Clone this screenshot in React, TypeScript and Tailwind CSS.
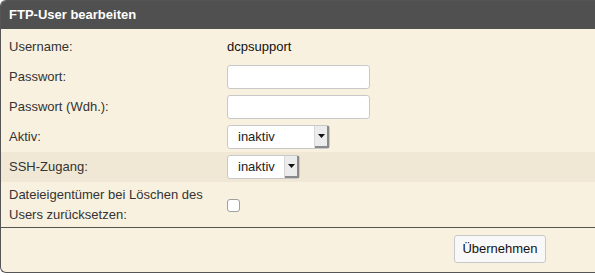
import React from "react";

function Select({ width }: { width: number }) {
  return (
    <div
      className="flex h-[24px] items-stretch rounded-[3px] border border-[#c8c8c8] bg-white"
      style={{ width }}
    >
      <div className="flex flex-1 items-center pl-[10px] text-[13px] text-[#222]">inaktiv</div>
      <div className="flex w-[15px] items-center justify-center border-l border-[#d8d8d8] bg-[#ececec] shadow-[inset_-2px_-2px_0_#8a8a8a]">
        <svg width="7" height="4" viewBox="0 0 7 4" className="mb-[2px] mr-[1px]">
          <path d="M0 0 L7 0 L3.5 4 Z" fill="#111" />
        </svg>
      </div>
    </div>
  );
}

function Row({
  label,
  children,
  striped,
}: {
  label: React.ReactNode;
  children?: React.ReactNode;
  striped?: boolean;
}) {
  return (
    <div className={`flex h-[30px] items-center ${striped ? "bg-[#f0e8d4]" : ""}`}>
      <div className="w-[226px] pl-[8px] text-[13px] text-[#333]">{label}</div>
      <div className="flex items-center">{children}</div>
    </div>
  );
}

export default function App() {
  return (
    <div
      className="h-[276px] w-[595px] bg-white"
      style={{ fontFamily: '"Liberation Sans", Arial, sans-serif' }}
    >
      <div className="h-[273px] w-[600px] overflow-hidden rounded-l-[6px] border border-r-0 border-[#555] bg-[#f9f1df]">
        <div className="flex h-[28px] items-center bg-[#505050] pl-[8px] text-[13px] font-bold text-white">
          FTP-User bearbeiten
        </div>
        <div className="pt-[3px]">
          <Row label="Username:">
            <span className="text-[13px] text-[#111]">dcpsupport</span>
          </Row>
          <Row label="Passwort:">
            <div className="h-[24px] w-[143px] rounded-[3px] border border-[#c8c8c8] bg-white" />
          </Row>
          <Row label="Passwort (Wdh.):">
            <div className="h-[24px] w-[143px] rounded-[3px] border border-[#c8c8c8] bg-white" />
          </Row>
          <Row label="Aktiv:">
            <Select width={103} />
          </Row>
          <Row label="SSH-Zugang:" striped>
            <Select width={73} />
          </Row>
          <div className="flex h-[45px] items-center">
            <div className="w-[226px] pl-[8px] text-[13px] leading-[20px] text-[#333]">
              Dateieigentümer bei Löschen des
              <br />
              Users zurücksetzen:
            </div>
            <div className="mt-[2px] h-[13px] w-[13px] rounded-[3px] border border-[#a0a0a0] bg-white" />
          </div>
        </div>
        <div className="flex h-[43px] items-center justify-end border-t border-[#555] pr-[54px]">
          <button className="h-[28px] w-[92px] rounded-[3px] border border-[#c8c8c8] bg-[#f8f8f8] text-[13px] text-[#111]">
            Übernehmen
          </button>
        </div>
      </div>
    </div>
  );
}
